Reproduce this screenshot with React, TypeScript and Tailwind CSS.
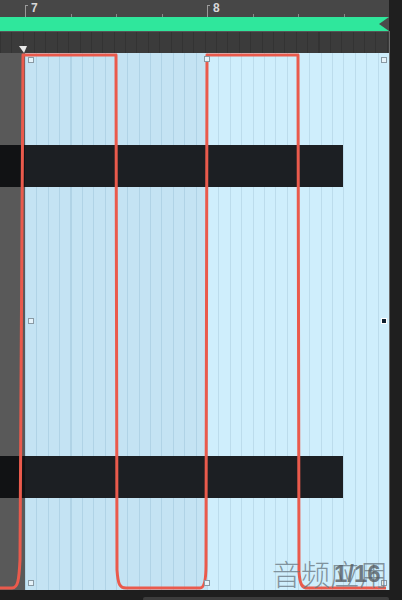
import React from "react";

const handles: [number, number, boolean?][] = [
  [31, 60],
  [207, 59],
  [384, 60],
  [31, 321],
  [384, 321, true],
  [31, 583],
  [207, 583],
  [384, 583],
];

export default function App() {
  return (
    <div className="relative w-[402px] h-[600px] overflow-hidden bg-[#1e1e1e] flex flex-col font-['Liberation_Sans',sans-serif]">
      {/* ruler */}
      <div className="relative h-[17px] bg-[#474747] shrink-0">
        <div className="absolute left-[25px] top-[5px] w-px h-[12px] bg-[#9a9a9a]" />
        <div className="absolute left-[25px] top-[5px] w-[3px] h-px bg-[#9a9a9a]" />
        <span className="absolute left-[31px] top-[1px] text-[12px] font-bold leading-[14px] text-[#d8d8d8]">7</span>
        <div className="absolute left-[207px] top-[5px] w-px h-[12px] bg-[#9a9a9a]" />
        <div className="absolute left-[207px] top-[5px] w-[3px] h-px bg-[#9a9a9a]" />
        <span className="absolute left-[213px] top-[1px] text-[12px] font-bold leading-[14px] text-[#d8d8d8]">8</span>
        {[71, 116, 162, 253, 298, 344].map((x) => (
          <div key={x} className="absolute top-[14px] w-px h-[3px] bg-[#8a8a8a]" style={{ left: x }} />
        ))}
        <div className="absolute right-0 top-0 w-[13px] h-full bg-[#1f1f1f]" />
      </div>
      {/* green loop bar */}
      <div className="flex h-[14px] shrink-0">
        <div className="relative w-[389px] bg-[#2fe79c]">
          <svg className="absolute right-0 top-0" width="12" height="14" viewBox="0 0 12 14">
            <polygon points="12,0 12,14 2,7" fill="#4a4a4a" />
          </svg>
        </div>
        <div className="flex-1 bg-[#1f1f1f]" />
      </div>
      {/* dark strip */}
      <div className="flex h-[22px] shrink-0">
        <div className="relative w-[389px] bg-[#3b3b3b] bg-[repeating-linear-gradient(90deg,#333_0px,#333_1px,transparent_1px,transparent_11.375px)] border-t border-[#555]">
          <svg className="absolute left-[19px] top-[14px]" width="8" height="7" viewBox="0 0 8 7">
            <polygon points="0,0 8,0 5,7" fill="#e8e8e8" />
          </svg>
        </div>
        <div className="flex-1 bg-[#1f1f1f] border-l border-[#6a6a6a]" />
      </div>
      {/* editor */}
      <div className="relative flex h-[537px] shrink-0">
        <div className="w-[25px] bg-[#595959]" />
        <div className="w-[182px] bg-[#c4e3f3] bg-[repeating-linear-gradient(90deg,#b0d3e6_0px,#b0d3e6_1px,transparent_1px,transparent_11.375px)]" />
        <div className="w-[182px] bg-[#cfeefc] bg-[repeating-linear-gradient(90deg,#bcdcec_0px,#bcdcec_1px,transparent_1px,transparent_11.375px)]" />
        <div className="flex-1 bg-[#1f1f1f] border-l border-[#6a6a6a]" />

        {/* notes */}
        <div className="absolute left-0 top-[92px] w-[343px] h-[42px] flex">
          <div className="w-[25px] bg-[#111214]" />
          <div className="flex-1 bg-[#1c1f23]" />
        </div>
        <div className="absolute left-0 top-[403px] w-[343px] h-[42px] flex">
          <div className="w-[25px] bg-[#111214]" />
          <div className="flex-1 bg-[#1c1f23]" />
        </div>

        {/* automation curve */}
        <svg className="absolute left-0 top-0" width="402" height="537" viewBox="0 53 402 537">
          <path
            d="M0 588 L12 588 C18 588 19 580 20 560 L23 55 L116 55 L117 570 C118 585 120 588 126 588 L200 588 C204 588 206 580 206 565 L207 55 L298 55 L299 572 C300 585 302 588 308 588 L386 588"
            fill="none"
            stroke="#ea5a4c"
            strokeWidth="3"
            strokeLinejoin="round"
          />
          {handles.map(([x, y, dark]) => (
            <rect
              key={`${x}-${y}`}
              x={x - 2.5}
              y={y - 2.5}
              width="5"
              height="5"
              fill={dark ? "#102030" : "#e6f3fa"}
              stroke={dark ? "#ffffff" : "#8a9aa4"}
              strokeWidth="1"
            />
          ))}
        </svg>
      </div>
      {/* bottom */}
      <div className="relative flex-1 bg-[#1e1e1e]">
        <div className="absolute left-[143px] top-[7px] w-[246px] h-[4px] rounded-sm bg-[#3c3c3c]" />
      </div>

      {/* watermark */}
      <div className="absolute left-[272px] top-[556px] flex items-center">
        <span className="text-[29px] leading-[34px] font-light text-[#6c7a84]/80 font-['Noto_Sans_CJK_SC',sans-serif]">
          音频应用
        </span>
        <span className="absolute left-[62px] top-[4px] text-[24px] font-bold leading-[28px] text-[#555c62]/80">
          1/16
        </span>
      </div>
    </div>
  );
}
